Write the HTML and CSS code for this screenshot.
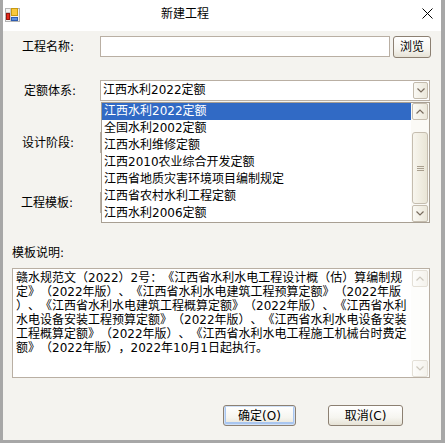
FILE: index.html
```html
<!DOCTYPE html>
<html lang="zh-CN">
<head>
<meta charset="utf-8">
<title>新建工程</title>
<link rel="stylesheet" href="styles.css">
</head>
<body>
<div class="window">
  <div class="titlebar">
    <svg class="app-icon" width="15" height="14" viewBox="0 0 15 14">
      <rect x="0.5" y="0.5" width="14" height="13" fill="#f2f2f2" stroke="#b4b4b4"/>
      <path d="M0.5 4.5H5M0.5 8.5H5M5.5 0.5V13.5" stroke="#c8c8c8" fill="none"/>
      <rect x="6.5" y="0.5" width="6" height="7" fill="#f8c83c" stroke="#c89a10"/>
      <rect x="1.5" y="5.5" width="3" height="6" fill="#e42a1c" stroke="#98160e"/>
      <rect x="6.5" y="9.5" width="6" height="3" fill="#5b8fe0" stroke="#2d5cb0"/>
    </svg>
    <span class="title">新建工程</span>
    <svg class="close" width="11" height="11" viewBox="0 0 11 11">
      <path d="M0.5 0.5L10.5 10.5M10.5 0.5L0.5 10.5" stroke="#000" stroke-width="1" fill="none"/>
    </svg>
  </div>

  <div class="client">
    <div class="row row-name">
      <span class="label">工程名称:</span>
      <div class="textbox"></div>
      <button class="btn btn-browse">浏览</button>
    </div>

    <div class="row row-quota">
      <span class="label label-wide">定额体系:</span>
      <div class="combo">
        <span class="combo-text">江西水利2022定额</span>
        <span class="combo-btn">
          <svg width="8" height="5" viewBox="0 0 8 5"><polyline points="0.5,0.5 4,4 7.5,0.5" fill="none" stroke="#7a6d5f" stroke-width="1.2"/></svg>
        </span>
      </div>
    </div>

    <div class="row row-stage">
      <span class="label">设计阶段:</span>
      <div class="combo"></div>
    </div>

    <div class="row row-template">
      <span class="label label-narrow">工程模板:</span>
      <div class="combo"></div>
    </div>

    <div class="memo-label">模板说明:</div>
    <div class="memo">
      <div class="memo-text">赣水规范文（2022）2号：《江西省水利水电工程设计概（估）算编制规<br>定》（2022年版）、《江西省水利水电建筑工程预算定额》（2022年版<br>）、《江西省水利水电建筑工程概算定额》（2022年版）、《江西省水利<br>水电设备安装工程预算定额》（2022年版）、《江西省水利水电设备安装<br>工程概算定额》（2022年版）、《江西省水利水电工程施工机械台时费定<br>额》（2022年版），2022年10月1日起执行。</div>
      <div class="sb sb-disabled">
        <span class="sb-btn">
          <svg width="8" height="5" viewBox="0 0 8 5"><polyline points="0.5,4.5 4,1 7.5,4.5" fill="none" stroke="#cdc8bd" stroke-width="1.2"/></svg>
        </span>
        <span class="sb-track"></span>
        <span class="sb-btn">
          <svg width="8" height="5" viewBox="0 0 8 5"><polyline points="0.5,0.5 4,4 7.5,0.5" fill="none" stroke="#cdc8bd" stroke-width="1.2"/></svg>
        </span>
      </div>
    </div>

    <div class="actions">
      <button class="btn btn-action btn-default">确定(O)</button>
      <button class="btn btn-action btn-cancel">取消(C)</button>
    </div>

    <div class="droplist">
      <ul class="items">
        <li class="item selected">江西水利2022定额</li>
        <li class="item">全国水利2002定额</li>
        <li class="item">江西水利维修定额</li>
        <li class="item">江西2010农业综合开发定额</li>
        <li class="item">江西省地质灾害环境项目编制规定</li>
        <li class="item">江西省农村水利工程定额</li>
        <li class="item">江西水利2006定额</li>
      </ul>
      <div class="sb">
        <span class="sb-btn">
          <svg width="8" height="5" viewBox="0 0 8 5"><polyline points="0.5,4.5 4,1 7.5,4.5" fill="none" stroke="#7a6d5f" stroke-width="1.2"/></svg>
        </span>
        <span class="sb-gap"></span>
        <span class="sb-thumb">
          <svg width="7" height="5" viewBox="0 0 7 5"><path d="M0 0.5H7M0 2.5H7M0 4.5H7" stroke="#a99f8e" stroke-width="1"/></svg>
        </span>
        <span class="sb-gap2"></span>
        <span class="sb-btn">
          <svg width="8" height="5" viewBox="0 0 8 5"><polyline points="0.5,0.5 4,4 7.5,0.5" fill="none" stroke="#7a6d5f" stroke-width="1.2"/></svg>
        </span>
      </div>
    </div>
  </div>
</div>
</body>
</html>
```

FILE: styles.css
```css
* {
  box-sizing: border-box;
  margin: 0;
  padding: 0;
}

body {
  margin: 0;
  background: #ffffff;
  font-family: "DejaVu Sans", "Noto Sans CJK SC", sans-serif;
  font-size: 12px;
  color: #000;
  text-spacing-trim: space-all;
}

.window {
  width: 445px;
  height: 443px;
  border-left: 3px solid #a7a7a7;
  border-right: 4px solid #a7a7a7;
  border-bottom: 3px solid #a7a7a7;
  display: flex;
  flex-direction: column;
  background: #fff;
}

.titlebar {
  height: 31px;
  flex: none;
  display: flex;
  align-items: flex-start;
  padding-top: 8px;
  padding-left: 2px;
  background: #fff;
}

.app-icon {
  display: block;
  flex: none;
}

.title {
  margin-left: 141px;
  line-height: 12px;
  font-size: 12px;
}

.close {
  display: block;
  margin-left: auto;
  margin-right: 8px;
}

.client {
  flex: 1;
  position: relative;
  background: #f4f3ef;
  padding-top: 5px;
}

.row {
  display: flex;
  align-items: center;
  height: 21px;
}

.row-name {
  height: 22px;
  align-items: flex-start;
}

.row-quota {
  margin-top: 22px;
}

.row-stage {
  margin-top: 31px;
}

.row-template {
  margin-top: 39px;
}

.label {
  width: 97px;
  flex: none;
  padding-left: 19px;
  line-height: 14px;
}

.row-name .label {
  margin-top: 4px;
}

.label-wide {
  padding-left: 21px;
}

.label-narrow {
  padding-left: 18px;
}

.textbox {
  width: 290px;
  height: 21px;
  background: #fff;
  border: 1px solid #b9afa3;
}

.btn {
  font: inherit;
  color: #000;
  border: 1px solid #8c8072;
  border-radius: 3px;
  background: linear-gradient(#ffffff, #f6f5f0 60%, #e6e2d6);
  line-height: 14px;
  cursor: default;
  text-spacing-trim: space-all;
}

.btn-browse {
  margin-left: 3px;
  width: 38px;
  height: 22px;
}

.combo {
  width: 330px;
  height: 21px;
  background: #fff;
  border: 1px solid #b9afa3;
  display: flex;
  align-items: flex-start;
}

.combo-text {
  flex: 1;
  padding-left: 2px;
  line-height: 19px;
}

.combo-btn {
  width: 15px;
  height: 17px;
  margin: 1px 1px 0 0;
  border: 1px solid #c3bbad;
  border-radius: 2px;
  background: linear-gradient(90deg, #faf9f4, #ebe7da);
  display: flex;
  align-items: center;
  justify-content: center;
}

.combo-btn svg {
  display: block;
}

.memo-label {
  margin-top: 33px;
  padding-left: 9px;
  line-height: 14px;
}

.memo {
  margin-top: 8px;
  margin-left: 9px;
  width: 418px;
  height: 110px;
  background: #fff;
  border: 1px solid #b9afa3;
  display: flex;
}

.memo-text {
  flex: 1;
  padding: 2px 0 0 3px;
  line-height: 14px;
  white-space: nowrap;
  overflow: hidden;
}

.sb {
  width: 18px;
  flex: none;
  display: flex;
  flex-direction: column;
  align-items: center;
  background: #fbfaf6;
}

.sb-btn {
  width: 16px;
  height: 17px;
  flex: none;
  border: 1px solid #c5bdaf;
  border-radius: 2px;
  background: linear-gradient(90deg, #fbfaf5, #ebe7d9);
  display: flex;
  align-items: center;
  justify-content: center;
}

.sb-btn svg,
.sb-thumb svg {
  display: block;
}

.sb-gap {
  height: 12px;
  flex: none;
}

.sb-gap2 {
  height: 1px;
  flex: none;
}

.sb-thumb {
  width: 16px;
  height: 72px;
  flex: none;
  border: 1px solid #c5bdaf;
  border-radius: 3px;
  background: linear-gradient(90deg, #f8f6ee, #e9e5d6);
  display: flex;
  align-items: center;
  justify-content: center;
}

.sb-disabled {
  padding-top: 1px;
  background: #fdfdfb;
}

.sb-disabled .sb-btn {
  border-color: #e4e0d7;
  background: linear-gradient(90deg, #fdfdfb, #f4f2ec);
}

.sb-track {
  flex: 1;
}

.actions {
  margin-top: 27px;
  display: flex;
  padding-left: 220px;
  gap: 32px;
}

.btn-action {
  height: 21px;
}

.btn-default {
  width: 73px;
  box-shadow: inset 0 0 0 1px #cfe0f7, inset 0 -1px 0 2px #a9c6f0;
}

.btn-cancel {
  width: 75px;
}

.droplist {
  position: absolute;
  left: 98px;
  top: 71px;
  width: 329px;
  height: 121px;
  background: #fff;
  border: 1px solid #a89f93;
  display: flex;
}

.items {
  list-style: none;
  flex: 1;
}

.item {
  height: 17px;
  line-height: 17px;
  padding-left: 2px;
  white-space: nowrap;
}

.item.selected {
  background: #316ac5;
  color: #fff;
}
```
